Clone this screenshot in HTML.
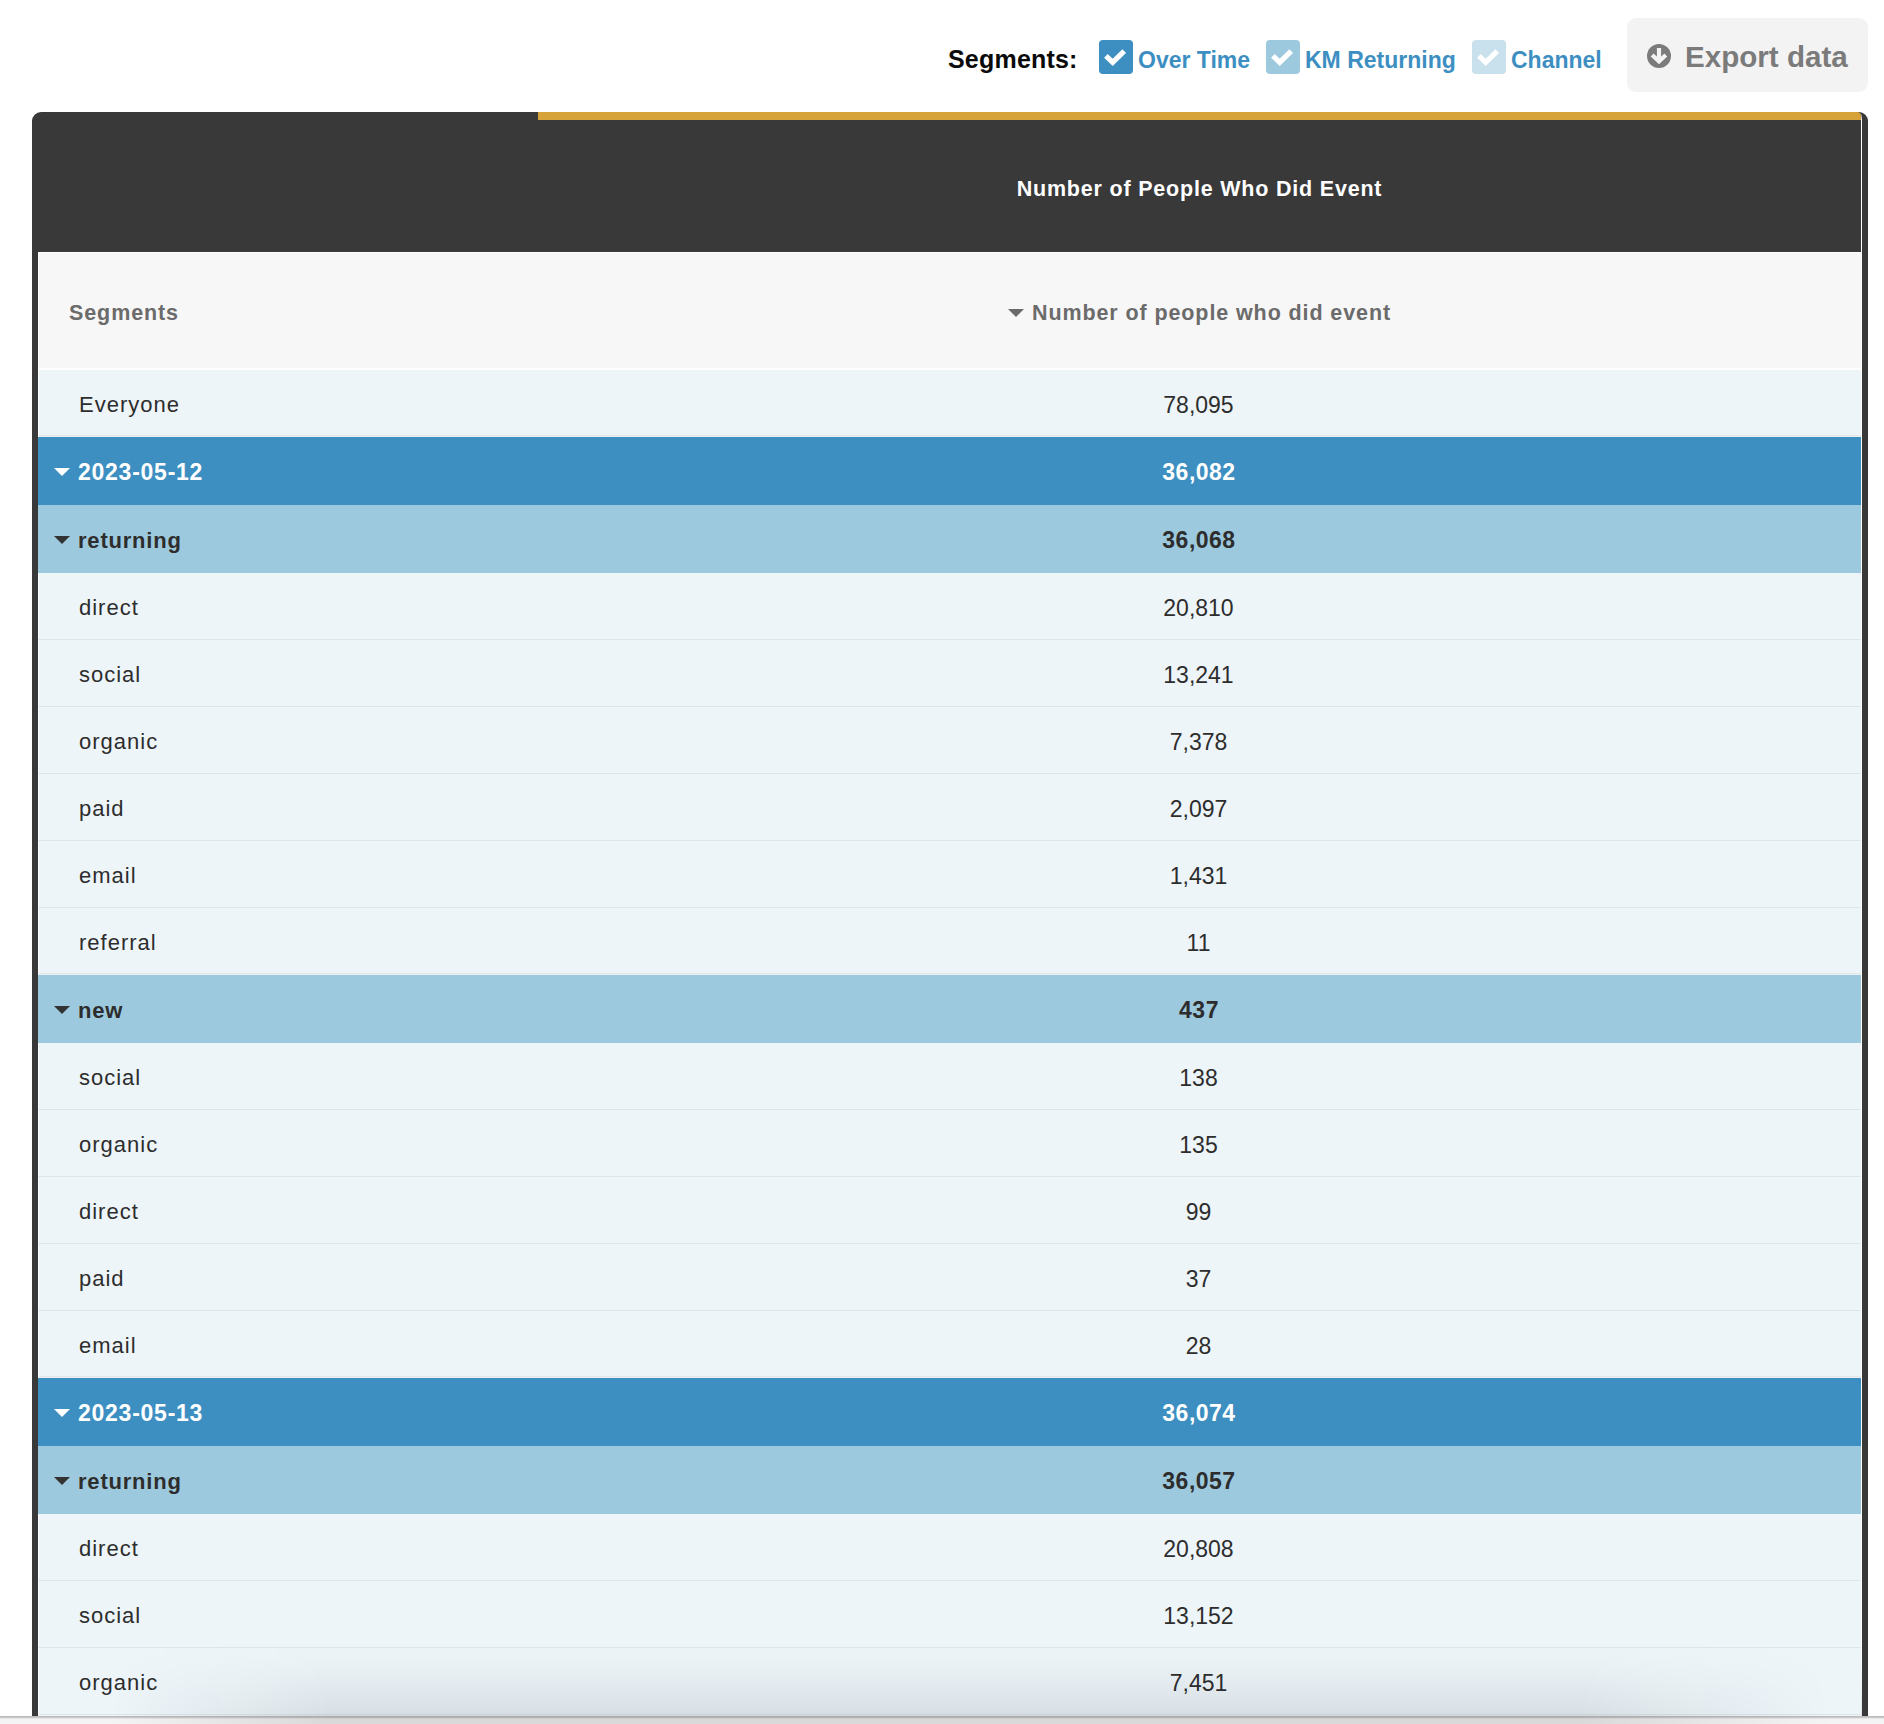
<!DOCTYPE html>
<html><head><meta charset="utf-8"><title>Segments</title><style>
html,body{margin:0;padding:0;background:#fff;width:1884px;height:1724px;overflow:hidden;position:relative;font-family:"Liberation Sans",sans-serif;}
.top{position:absolute;left:0;top:0;width:1884px;height:100px;}
.seglabel{position:absolute;left:948px;top:41px;font-size:25px;letter-spacing:0.2px;font-weight:bold;color:#0a0a0a;line-height:36px;}
.cb{position:absolute;top:40px;width:34px;height:34px;border-radius:4px;}
.cb svg{display:block}
.cb1{left:1099px;background:#3d8fc2}
.cb2{left:1266px;background:#9dc9de}
.cb3{left:1472px;background:#c8e1ec}
.cbl{position:absolute;top:42px;line-height:36px;font-size:23px;font-weight:bold;color:#3d8fc2;}
.l1{left:1138px}.l2{left:1305px}.l3{left:1511px}
.export{position:absolute;left:1627px;top:18px;width:241px;height:74px;border-radius:9px;background:#f3f3f3;}
.exicon{position:absolute;left:1648px;top:44px;}
.export .exicon{left:20.4px;top:26px;}
.extext{position:absolute;left:58px;top:21px;line-height:36px;font-size:29.6px;font-weight:bold;color:#7b7b7b;}
.frame{position:absolute;left:32px;top:112px;width:1836px;height:1620px;background:#393939;border-radius:9px 9px 0 0;}
.orange{position:absolute;left:538px;top:112px;width:1323px;height:8px;background:#d6a33a;border-top-right-radius:4px;}
.rwhite{position:absolute;left:1861px;top:114px;width:1px;height:1602px;background:linear-gradient(to bottom,rgba(255,255,255,0.2) 0px,#fff 6px,#fff 1540px,#dfe3e6 1602px);}
.hdr{position:absolute;left:38px;top:120px;width:1823px;height:132px;}
.hdrtitle{position:absolute;left:500px;width:1323px;top:3px;height:132px;line-height:132px;text-align:center;color:#fff;font-size:21.5px;letter-spacing:0.8px;font-weight:bold;}
.colhdr{position:absolute;left:38px;top:252px;width:1823px;height:118px;background:#f7f7f7;border-top:1px solid #fff;border-left:1px solid #fff;box-sizing:border-box;border-bottom:2px solid #fff;}
.seghdr{position:absolute;left:30px;top:3px;line-height:115px;font-size:21.5px;letter-spacing:0.9px;font-weight:bold;color:#6b6b6b;}
.numhdr{position:absolute;left:499px;width:1323px;top:3px;line-height:115px;text-align:center;font-size:21.5px;letter-spacing:0.9px;font-weight:bold;color:#6b6b6b;}
.row{position:absolute;left:38px;width:1823px;box-sizing:border-box;}
.row.child{background:#eef5f9;border-bottom:1px solid #dfe6ea;border-left:1px solid #fbfdfe;}
.row.child.last{border-bottom:1px solid #eeeff0;box-shadow:inset 0 -1px 0 #e3e8eb}
.row.date{background:#3d8fc1;color:#fff;font-weight:bold;}
.row.grp{background:#9dc9de;color:#333;font-weight:bold;}
.lab{position:absolute;left:40px;top:0;bottom:0;display:flex;align-items:center;font-size:22px;letter-spacing:1px;color:#2d2d2d;}
.lab span.t{position:relative;top:1.5px}
.date .lab{color:#fff;font-size:23px;letter-spacing:0.75px}
.grp .lab{font-size:22px;letter-spacing:0.8px}
.date .lab span.t{top:1px}
.grp .lab span.t{top:2px}
.num{position:absolute;left:498px;width:1323px;top:0;bottom:0;display:flex;align-items:center;justify-content:center;font-size:23px;color:#2d2d2d;}
.num span{position:relative;top:2px}
.date .num,.grp .num{letter-spacing:0.5px}
.date .num span,.grp .num span{left:1.5px;top:1px}
.date .num{color:#fff}
.tri{position:absolute;left:-24px;top:50%;margin-top:-3px;width:0;height:0;border-left:8px solid transparent;border-right:8px solid transparent;border-top:8px solid #333;}
.date .tri{border-top-color:#fff}
.numhdr .tri{position:relative;left:auto;top:-1.5px;margin-top:0;display:inline-block;vertical-align:middle;margin-right:8px;border-top-color:#6b6b6b;}
.sep{position:absolute;left:38px;width:1823px;height:1px;background:#e3e8eb}
.filler{position:absolute;left:38px;top:1715px;width:1823px;height:1px;background:#eef5f9;border-left:1px solid #fbfdfe;box-sizing:border-box}
.shadow{position:absolute;left:0;top:1640px;width:1884px;height:84px;z-index:5;pointer-events:none;
background:linear-gradient(to bottom, rgba(0,15,30,0) 0px, rgba(0,15,30,0.012) 20px, rgba(0,15,30,0.035) 40px, rgba(0,15,30,0.065) 60px, rgba(0,15,30,0.085) 72px, rgba(0,0,0,0.11) 80px, rgba(0,0,0,0.11) 84px);
-webkit-mask-image:linear-gradient(to right, rgba(0,0,0,0) 110px, rgba(0,0,0,1) 330px, rgba(0,0,0,1) 1580px, rgba(0,0,0,0) 1830px);
mask-image:linear-gradient(to right, rgba(0,0,0,0) 110px, rgba(0,0,0,1) 330px, rgba(0,0,0,1) 1580px, rgba(0,0,0,0) 1830px);}
.bottombar{position:absolute;left:0;top:1716px;width:1884px;height:8px;z-index:4;background:linear-gradient(to bottom,#bbbbbb 0px,#bbbbbb 1px,#d8d8d8 2px,#f3f3f3 3px,#f5f5f5 8px);}

</style></head><body>
<div class="top">
<div class="seglabel">Segments:</div>
<div class="cb cb1"><svg viewBox="0 0 34 34" width="34" height="34"><path d="M6.9 15.9 L13.7 22.3 L25.2 11.15" fill="none" stroke="#fff" stroke-width="5.2" stroke-linecap="butt" stroke-linejoin="miter"/></svg></div><div class="cbl l1">Over Time</div>
<div class="cb cb2"><svg viewBox="0 0 34 34" width="34" height="34"><path d="M6.9 15.9 L13.7 22.3 L25.2 11.15" fill="none" stroke="#fff" stroke-width="5.2" stroke-linecap="butt" stroke-linejoin="miter"/></svg></div><div class="cbl l2">KM Returning</div>
<div class="cb cb3"><svg viewBox="0 0 34 34" width="34" height="34"><path d="M6.9 15.9 L13.7 22.3 L25.2 11.15" fill="none" stroke="#fff" stroke-width="5.2" stroke-linecap="butt" stroke-linejoin="miter"/></svg></div><div class="cbl l3">Channel</div>
<div class="export"><svg class="exicon" viewBox="0 0 24 24" width="24" height="24"><circle cx="12" cy="12" r="12" fill="#7b7b7b"/><path d="M12 3.9 V16 M5.15 10.9 L12 17.4 L18.85 10.9" fill="none" stroke="#f3f3f3" stroke-width="4.2" stroke-linecap="butt" stroke-linejoin="miter"/></svg><span class="extext">Export data</span></div>
</div>
<div class="frame"></div><div class="orange"></div><div class="rwhite"></div>
<div class="hdr"><div class="hdrtitle">Number of People Who Did Event</div></div>
<div class="colhdr"><div class="seghdr">Segments</div><div class="numhdr"><span class="tri g"></span>Number of people who did event</div></div>
<div class="row child last" style="top:370px;height:67px"><div class="lab"><span class="t">Everyone</span></div><div class="num"><span>78,095</span></div></div>
<div class="row date" style="top:437px;height:68px"><div class="lab"><span class="tri"></span><span class="t">2023-05-12</span></div><div class="num"><span>36,082</span></div></div>
<div class="row grp" style="top:505px;height:68px"><div class="lab"><span class="tri"></span><span class="t">returning</span></div><div class="num"><span>36,068</span></div></div>
<div class="row child" style="top:573px;height:67px"><div class="lab"><span class="t">direct</span></div><div class="num"><span>20,810</span></div></div>
<div class="row child" style="top:640px;height:67px"><div class="lab"><span class="t">social</span></div><div class="num"><span>13,241</span></div></div>
<div class="row child" style="top:707px;height:67px"><div class="lab"><span class="t">organic</span></div><div class="num"><span>7,378</span></div></div>
<div class="row child" style="top:774px;height:67px"><div class="lab"><span class="t">paid</span></div><div class="num"><span>2,097</span></div></div>
<div class="row child" style="top:841px;height:67px"><div class="lab"><span class="t">email</span></div><div class="num"><span>1,431</span></div></div>
<div class="row child last" style="top:908px;height:67px"><div class="lab"><span class="t">referral</span></div><div class="num"><span>11</span></div></div>
<div class="row grp" style="top:975px;height:68px"><div class="lab"><span class="tri"></span><span class="t">new</span></div><div class="num"><span>437</span></div></div>
<div class="row child" style="top:1043px;height:67px"><div class="lab"><span class="t">social</span></div><div class="num"><span>138</span></div></div>
<div class="row child" style="top:1110px;height:67px"><div class="lab"><span class="t">organic</span></div><div class="num"><span>135</span></div></div>
<div class="row child" style="top:1177px;height:67px"><div class="lab"><span class="t">direct</span></div><div class="num"><span>99</span></div></div>
<div class="row child" style="top:1244px;height:67px"><div class="lab"><span class="t">paid</span></div><div class="num"><span>37</span></div></div>
<div class="row child last" style="top:1311px;height:67px"><div class="lab"><span class="t">email</span></div><div class="num"><span>28</span></div></div>
<div class="row date" style="top:1378px;height:68px"><div class="lab"><span class="tri"></span><span class="t">2023-05-13</span></div><div class="num"><span>36,074</span></div></div>
<div class="row grp" style="top:1446px;height:68px"><div class="lab"><span class="tri"></span><span class="t">returning</span></div><div class="num"><span>36,057</span></div></div>
<div class="row child" style="top:1514px;height:67px"><div class="lab"><span class="t">direct</span></div><div class="num"><span>20,808</span></div></div>
<div class="row child" style="top:1581px;height:67px"><div class="lab"><span class="t">social</span></div><div class="num"><span>13,152</span></div></div>
<div class="row child" style="top:1648px;height:67px"><div class="lab"><span class="t">organic</span></div><div class="num"><span>7,451</span></div></div>
<div class="filler"></div><div class="shadow"></div><div class="bottombar"></div>
</body></html>
